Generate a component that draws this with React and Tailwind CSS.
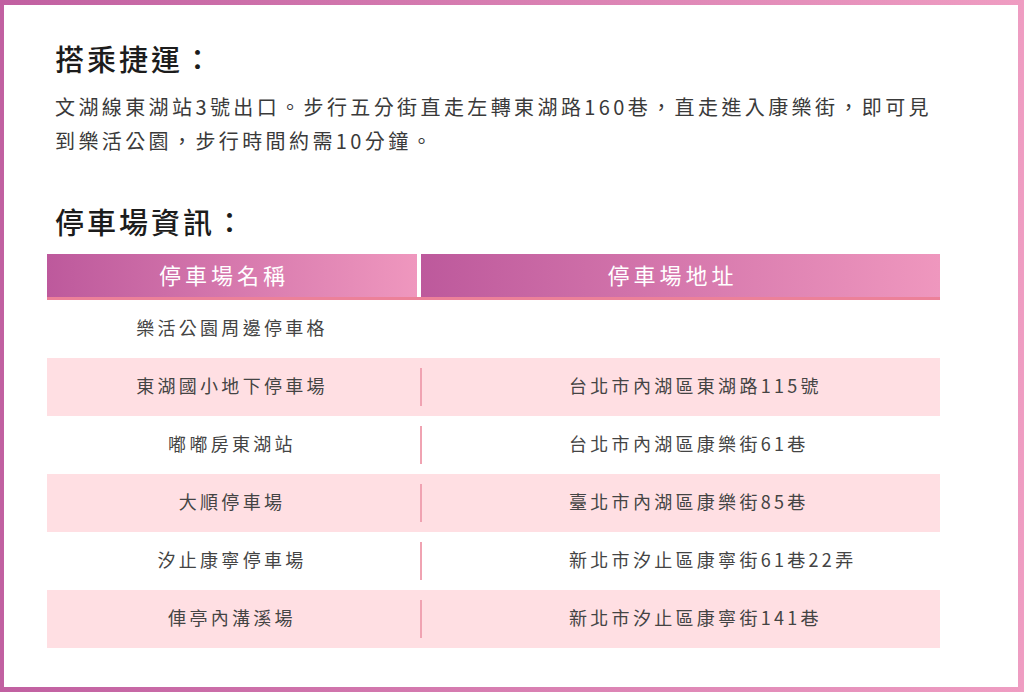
import React from "react";

const rows = [
  { name: "樂活公園周邊停車格", addr: "" },
  { name: "東湖國小地下停車場", addr: "台北市內湖區東湖路115號" },
  { name: "嘟嘟房東湖站", addr: "台北市內湖區康樂街61巷" },
  { name: "大順停車場", addr: "臺北市內湖區康樂街85巷" },
  { name: "汐止康寧停車場", addr: "新北市汐止區康寧街61巷22弄" },
  { name: "俥亭內溝溪場", addr: "新北市汐止區康寧街141巷" },
];

export default function App() {
  return (
    <div
      className="w-[1024px] h-[692px] bg-gradient-to-r from-[#c160a1] to-[#ef9dc2] pl-[4px] pt-[5px] pr-[6px] pb-[5px]"
      style={{ fontFamily: '"Noto Sans CJK TC", "Noto Sans", sans-serif' }}
    >
      <div className="h-full bg-white pl-[43px] pt-[33px]">
        <h2 className="ml-2 text-[29px] leading-[40px] font-medium tracking-[3px] text-[#1c1c1c]">搭乘捷運：</h2>
        <p className="ml-2 mt-[12px] w-[885px] text-[20px] leading-[34px] tracking-[3.4px] text-[#3a3a3a]">
          文湖線東湖站3號出口。步行五分街直走左轉東湖路160巷，直走進入康樂街，即可見到樂活公園，步行時間約需10分鐘。
        </p>
        <h2 className="ml-2 mt-[43px] text-[29px] leading-[40px] font-medium tracking-[3px] text-[#1c1c1c]">停車場資訊：</h2>

        <div className="mt-[13px] w-[893px]">
          <div className="flex h-[46px] border-b-[3px] border-[#ec8199]">
            <div className="w-[370px] flex items-center justify-center pb-[2px] pr-[16px] bg-gradient-to-r from-[#bd599c] to-[#ef97be] text-white text-[22px] tracking-[4px]">
              停車場名稱
            </div>
            <div className="w-[4px] bg-white" />
            <div className="flex-1 flex items-center justify-center pb-[2px] pr-[16px] bg-gradient-to-r from-[#bd599c] to-[#ef97be] text-white text-[22px] tracking-[4px]">
              停車場地址
            </div>
          </div>
          {rows.map((r, i) => (
            <div key={r.name} className={`flex h-[58px] items-center pb-[3px] ${i % 2 === 1 ? "bg-[#ffdfe3]" : "bg-white"}`}>
              <div className="w-[370px] text-center text-[18px] tracking-[3.3px] text-[#444]">{r.name}</div>
              <div className="w-[4px] flex pt-[3px]">
                {r.addr && <div className="ml-[3px] w-[2px] h-[38px] shrink-0 bg-[#f0a3b2]" />}
              </div>
              <div className="flex-1 pl-[148px] text-[18px] tracking-[3.3px] text-[#444]">{r.addr}</div>
            </div>
          ))}
        </div>
      </div>
    </div>
  );
}
